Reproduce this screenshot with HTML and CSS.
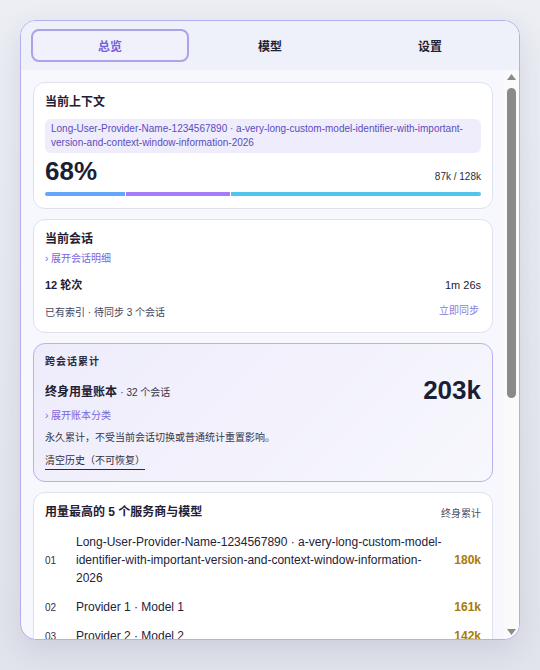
FILE: index.html
```html
<!DOCTYPE html>
<html lang="zh-CN">
<head>
    <meta charset="UTF-8">
    <meta name="viewport" content="width=device-width, initial-scale=1.0">
    <title>用量概览</title>
    <link rel="stylesheet" href="styles.css">
</head>
<body>
    <div class="panel">
        <div class="tabs">
            <button class="tab active">总览</button>
            <button class="tab">模型</button>
            <button class="tab">设置</button>
        </div>

        <div class="body">
            <div class="content">
                <!-- Current context -->
                <div class="card">
                    <div class="card-title">当前上下文</div>
                    <div class="model-chip">Long-User-Provider-Name-1234567890 · a-very-long-custom-model-identifier-with-important-version-and-context-window-information-2026</div>
                    <div class="usage-row">
                        <span class="big-number">68%</span>
                        <span class="usage-total">87k / 128k</span>
                    </div>
                    <div class="usage-bar">
                        <div class="seg seg-input" style="width: 18.4%"></div>
                        <div class="seg seg-output" style="width: 24%"></div>
                        <div class="seg seg-cache" style="width: 57.6%"></div>
                    </div>
                </div>

                <!-- Current session -->
                <div class="card">
                    <div class="card-title">当前会话</div>
                    <div class="expand-link">› 展开会话明细</div>
                    <div class="session-row">
                        <span class="turns">12 轮次</span>
                        <span class="duration">1m 26s</span>
                    </div>
                    <div class="sync-row">
                        <span class="sync-status">已有索引 · 待同步 3 个会话</span>
                        <button class="sync-btn">立即同步</button>
                    </div>
                </div>

                <!-- Lifetime ledger -->
                <div class="card card-ledger">
                    <div class="ledger-label">跨会话累计</div>
                    <div class="ledger-row">
                        <div class="ledger-name">终身用量账本 <span class="ledger-count">· 32 个会话</span></div>
                        <span class="big-number">203k</span>
                    </div>
                    <div class="expand-link">› 展开账本分类</div>
                    <div class="ledger-note">永久累计，不受当前会话切换或普通统计重置影响。</div>
                    <button class="clear-btn">清空历史（不可恢复）</button>
                </div>

                <!-- Top providers -->
                <div class="card">
                    <div class="card-head">
                        <span class="card-title">用量最高的 5 个服务商与模型</span>
                        <span class="card-hint">终身累计</span>
                    </div>
                    <div class="rank-list">
                        <div class="rank-row">
                            <span class="rank-no">01</span>
                            <span class="rank-name">Long-User-Provider-Name-1234567890 · a-very-long-custom-model-identifier-with-important-version-and-context-window-information-2026</span>
                            <span class="rank-value">180k</span>
                        </div>
                        <div class="rank-row">
                            <span class="rank-no">02</span>
                            <span class="rank-name">Provider 1 · Model 1</span>
                            <span class="rank-value">161k</span>
                        </div>
                        <div class="rank-row">
                            <span class="rank-no">03</span>
                            <span class="rank-name">Provider 2 · Model 2</span>
                            <span class="rank-value">142k</span>
                        </div>
                        <div class="rank-row">
                            <span class="rank-no">04</span>
                            <span class="rank-name">Provider 3 · Model 3</span>
                            <span class="rank-value">96k</span>
                        </div>
                        <div class="rank-row">
                            <span class="rank-no">05</span>
                            <span class="rank-name">Provider 4 · Model 4</span>
                            <span class="rank-value">58k</span>
                        </div>
                    </div>
                </div>
            </div>

            <!-- scrollbar for the card list -->
            <div class="scrollbar">
                <svg class="scroll-arrow" width="15" height="15" viewBox="0 0 15 15"><path d="M3 10 L7.5 4 L12 10 Z" fill="#8a8a8a"/></svg>
                <div class="scroll-track">
                    <div class="scroll-thumb"></div>
                </div>
                <svg class="scroll-arrow" width="15" height="15" viewBox="0 0 15 15"><path d="M3 5 L12 5 L7.5 11 Z" fill="#8a8a8a"/></svg>
            </div>
        </div>
    </div>
</body>
</html>
```

FILE: styles.css
```css
* {
    box-sizing: border-box;
}
body {
    margin: 0;
    padding: 20px;
    font-family: "Liberation Sans", "Noto Sans CJK SC", sans-serif;
    color: #1f2033;
    background: linear-gradient(180deg, #eceef4 0%, #e2e4ec 100%);
    min-height: 670px;
}
button {
    font-family: inherit;
    cursor: pointer;
}
.panel {
    width: 500px;
    height: 620px;
    display: flex;
    flex-direction: column;
    border: 1px solid #b5aeee;
    border-radius: 16px;
    overflow: hidden;
    background-color: #f7f8fd;
    box-shadow: 0 10px 30px rgba(40, 48, 100, 0.12);
}
.tabs {
    display: grid;
    grid-template-columns: repeat(3, 1fr);
    gap: 2px;
    padding: 8px 10px;
    background-color: #eef0fa;
}
.tab {
    height: 33px;
    border: 2px solid transparent;
    border-radius: 8px;
    background: none;
    font-size: 12px;
    font-weight: bold;
    color: #1f2033;
}
.tab.active {
    border-color: #aba2ea;
    background-color: #f0f1fb;
    color: #7662dc;
}
.body {
    flex: 1;
    min-height: 0;
    display: flex;
}
.content {
    flex: 1;
    overflow: hidden;
    padding: 12px 11px 12px 12px;
    display: flex;
    flex-direction: column;
    gap: 10px;
}
.scrollbar {
    width: 15px;
    flex-shrink: 0;
    display: flex;
    flex-direction: column;
    background-color: #fafafa;
}
.scroll-arrow {
    display: block;
    flex-shrink: 0;
}
.scroll-track {
    flex: 1;
    padding-top: 3px;
}
.scroll-thumb {
    width: 9px;
    height: 310px;
    margin: 0 auto;
    border-radius: 5px;
    background-color: #8a8a8a;
}
.card {
    flex-shrink: 0;
    background-color: #fff;
    border: 1px solid #dfe0ee;
    border-radius: 12px;
    padding: 11px 11px 12px;
}
.card-title {
    font-size: 12px;
    font-weight: bold;
    line-height: 16px;
}
.card-head {
    display: flex;
    justify-content: space-between;
    align-items: center;
}
.card-hint {
    font-size: 10px;
    color: #4a4b5c;
}
.model-chip {
    margin-top: 9px;
    padding: 3px 6px;
    border-radius: 6px;
    background-color: #efecfb;
    color: #5a4cbf;
    font-size: 10px;
    line-height: 14px;
}
.usage-row {
    margin-top: 4px;
    display: flex;
    justify-content: space-between;
    align-items: baseline;
}
.big-number {
    font-size: 26px;
    font-weight: bold;
    line-height: 28px;
    color: #1c1e36;
}
.usage-total {
    font-size: 10px;
    color: #2a2b3c;
}
.usage-bar {
    margin-top: 7px;
    height: 4px;
    display: flex;
    gap: 1px;
    border-radius: 2px;
    overflow: hidden;
}
.seg-input {
    background-color: #63a6fa;
}
.seg-output {
    background-color: #a77cfa;
}
.seg-cache {
    background-color: #50c4ea;
}
.expand-link {
    margin-top: 5px;
    font-size: 10px;
    line-height: 14px;
    color: #7a64dc;
}
.session-row {
    margin-top: 11px;
    display: flex;
    justify-content: space-between;
    align-items: center;
    line-height: 16px;
}
.turns {
    font-size: 11px;
    font-weight: bold;
}
.duration {
    font-size: 11px;
}
.sync-row {
    margin-top: 9px;
    display: flex;
    justify-content: space-between;
    align-items: center;
}
.sync-status {
    font-size: 10px;
    color: #45465a;
}
.sync-btn {
    border: none;
    background: none;
    padding: 2px 2px;
    font-size: 10px;
    line-height: 14px;
    color: #8a7ade;
}
.card-ledger {
    border-color: #b8b0f0;
    background: linear-gradient(135deg, #eeecfb 0%, #f7f7fd 100%);
    padding-bottom: 11px;
}
.ledger-label {
    font-size: 10px;
    font-weight: bold;
    letter-spacing: 1px;
    line-height: 14px;
    color: #2b2c3e;
}
.ledger-row {
    margin-top: 6px;
    display: flex;
    justify-content: space-between;
    align-items: center;
    height: 30px;
}
.ledger-name {
    font-size: 12px;
    font-weight: bold;
}
.ledger-count {
    font-size: 10px;
    font-weight: normal;
    color: #333446;
}
.card-ledger .expand-link {
    margin-top: 4px;
}
.ledger-note {
    margin-top: 8px;
    font-size: 10px;
    line-height: 14px;
    color: #36374a;
}
.clear-btn {
    display: block;
    margin-top: 8px;
    padding: 0 0 1px;
    border: none;
    border-bottom: 1px solid #2a2b40;
    background: none;
    font-size: 10px;
    line-height: 15px;
    color: #2f3044;
}
.rank-list {
    margin-top: 13px;
    display: flex;
    flex-direction: column;
    gap: 11px;
}
.rank-row {
    display: grid;
    grid-template-columns: 21px 1fr auto;
    column-gap: 10px;
    align-items: center;
}
.rank-no {
    font-size: 10px;
    color: #2e3050;
}
.rank-name {
    font-size: 12px;
    line-height: 18px;
    color: #22233a;
}
.rank-value {
    font-size: 12px;
    font-weight: bold;
    color: #a87b06;
}
```
